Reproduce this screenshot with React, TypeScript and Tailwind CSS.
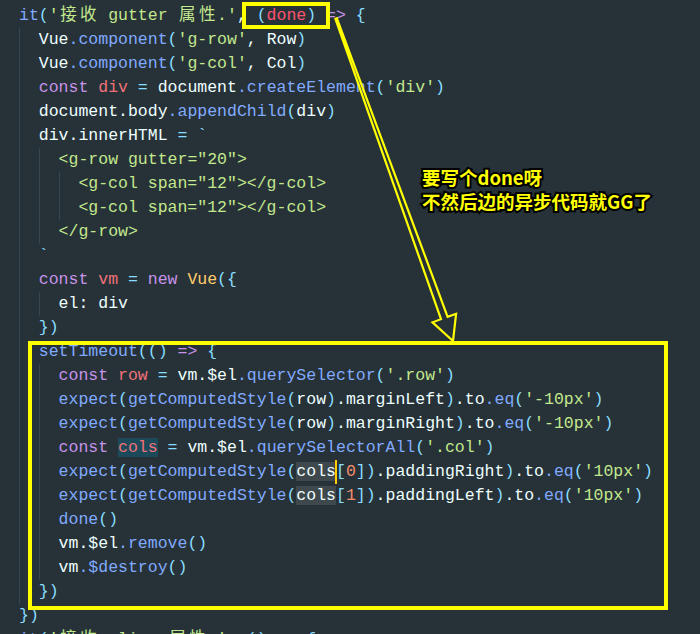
import React from 'react';

const W = 'text-[#eeffff]';
const B = 'text-[#82aaff]';
const C = 'text-[#89ddff]';
const G = 'text-[#c3e88d]';
const P = 'text-[#c792ea]';
const R = 'text-[#ff5370]';
const V = 'text-[#f07178]';
const Y = 'text-[#ffcb6b]';
const O = 'text-[#f78c6c]';

type Tok = [string, string, string?];
type Line = { indent: number; toks: Tok[] };

const isCjk = (ch: string) => /[\u3000-\u9fff]/.test(ch);

// CJK glyphs take two columns in the editor
const renderText = (s: string) =>
  Array.from(s).map((ch, i) =>
    isCjk(ch) ? (
      <span key={i} className="inline-block w-[2ch] text-center">
        {ch}
      </span>
    ) : (
      ch
    )
  );

const expectLine = (arg: Tok[], prop: string, val: string): Tok[] => [
  ['expect', B],
  ['(', C],
  ['getComputedStyle', B],
  ['(', C],
  ...arg,
  [')', C],
  ['.' + prop, W],
  [')', C],
  ['.to', W],
  ['.eq', B],
  ['(', C],
  ["'" + val + "'", G],
  [')', C],
];

const lines: Line[] = [
  { indent: 0, toks: [['})', C]] },
  {
    indent: 0,
    toks: [
      ['it', B],
      ['(', C],
      ["'接收 gutter 属性.'", G],
      [', ', W],
      ['(', C],
      ['done', R],
      [')', C],
      [' ', W],
      ['=>', P],
      [' ', W],
      ['{', C],
    ],
  },
  { indent: 1, toks: [['Vue', W], ['.component', B], ['(', C], ["'g-row'", G], [', Row', W], [')', C]] },
  { indent: 1, toks: [['Vue', W], ['.component', B], ['(', C], ["'g-col'", G], [', Col', W], [')', C]] },
  {
    indent: 1,
    toks: [
      ['const ', P],
      ['div', V],
      [' = ', C],
      ['document', W],
      ['.createElement', B],
      ['(', C],
      ["'div'", G],
      [')', C],
    ],
  },
  { indent: 1, toks: [['document.body', W], ['.appendChild', B], ['(', C], ['div', W], [')', C]] },
  { indent: 1, toks: [['div.innerHTML', W], [' = ', C], ['`', C]] },
  { indent: 2, toks: [['<g-row gutter="20">', G]] },
  { indent: 3, toks: [['<g-col span="12"></g-col>', G]] },
  { indent: 3, toks: [['<g-col span="12"></g-col>', G]] },
  { indent: 2, toks: [['</g-row>', G]] },
  { indent: 1, toks: [['`', C]] },
  {
    indent: 1,
    toks: [
      ['const ', P],
      ['vm', V],
      [' = ', C],
      ['new ', P],
      ['Vue', Y],
      ['({', C],
    ],
  },
  { indent: 2, toks: [['el: div', W]] },
  { indent: 1, toks: [['})', C]] },
  { indent: 1, toks: [['setTimeout', B], ['(() ', C], ['=>', P], [' {', C]] },
  {
    indent: 2,
    toks: [
      ['const ', P],
      ['row', V],
      [' = ', C],
      ['vm.$el', W],
      ['.querySelector', B],
      ['(', C],
      ["'.row'", G],
      [')', C],
    ],
  },
  { indent: 2, toks: expectLine([['row', W]], 'marginLeft', '-10px') },
  { indent: 2, toks: expectLine([['row', W]], 'marginRight', '-10px') },
  {
    indent: 2,
    toks: [
      ['const ', P],
      ['cols', V, 'bg-[#1d4a5b]'],
      [' = ', C],
      ['vm.$el', W],
      ['.querySelectorAll', B],
      ['(', C],
      ["'.col'", G],
      [')', C],
    ],
  },
  {
    indent: 2,
    toks: expectLine(
      [
        ['cols', W, 'bg-[#3e484d]'],
        ['|', '', 'cursor'],
        ['[', C],
        ['0', O],
        [']', C],
      ],
      'paddingRight',
      '10px'
    ),
  },
  {
    indent: 2,
    toks: expectLine(
      [
        ['cols', W, 'bg-[#3e484d]'],
        ['[', C],
        ['1', O],
        [']', C],
      ],
      'paddingLeft',
      '10px'
    ),
  },
  { indent: 2, toks: [['done', B], ['()', C]] },
  { indent: 2, toks: [['vm.$el', W], ['.remove', B], ['()', C]] },
  { indent: 2, toks: [['vm', W], ['.$destroy', B], ['()', C]] },
  { indent: 1, toks: [['})', C]] },
  { indent: 0, toks: [['})', C]] },
  {
    indent: 0,
    toks: [
      ['it', B],
      ['(', C],
      ["'接收 align 属性.'", G],
      [', ', W],
      ['() ', C],
      ['=>', P],
      [' {', C],
    ],
  },
];

const CodeLine: React.FC<{ line: Line }> = ({ line }) => (
  <div className="h-[24px] leading-[24px] whitespace-pre flex items-start">
    {Array.from({ length: line.indent }).map((_, i) => (
      <span key={i} className="inline-block w-[2ch] h-[24px] border-l border-[#37474f] shrink-0" />
    ))}
    <span>
      {line.toks.map(([text, color, extra], i) =>
        extra === 'cursor' ? (
          <span key={i} className="relative inline-block w-0 h-[24px] align-top">
            <span className="absolute left-[-1px] top-0 w-[2px] h-[24px] bg-[#ffcc00]" />
          </span>
        ) : (
          <span key={i} className={`${color} ${extra ?? ''}`}>
            {renderText(text)}
          </span>
        )
      )}
    </span>
  </div>
);

export default function App() {
  return (
    <div className="relative w-[700px] h-[634px] overflow-hidden bg-[#263238] font-['Liberation_Mono','Noto_Sans_CJK_SC',monospace] text-[16.5px]">
      <div className="mt-[-20px] pl-[19px]">
        {lines.map((line, i) => (
          <CodeLine key={i} line={line} />
        ))}
      </div>

      {/* annotations drawn over the editor */}
      <div className="absolute left-[242px] top-[2px] w-[88px] h-[27px] border-4 border-[#ffff00]" />
      <div className="absolute left-[28px] top-[341px] w-[640px] h-[269px] border-4 border-[#ffff00]" />

      <svg className="absolute inset-0 pointer-events-none" width="700" height="634" viewBox="0 0 700 634">
        <polygon
          points="336.8,18.2 447.6,316.8 456.1,313.8 453,341 432.5,322.3 441,319.2 335.4,18.8"
          fill="none"
          stroke="#ffff00"
          strokeWidth="2.2"
          strokeLinejoin="miter"
        />
      </svg>

      <div className="absolute left-[422px] top-[165px] font-['Noto_Sans_CJK_SC',sans-serif] font-bold text-[18.5px] leading-[24px] text-[#ffff00] [-webkit-text-stroke:4px_#000] [paint-order:stroke_fill] whitespace-nowrap">
        <div>要写个done呀</div>
        <div>不然后边的异步代码就GG了</div>
      </div>
    </div>
  );
}
